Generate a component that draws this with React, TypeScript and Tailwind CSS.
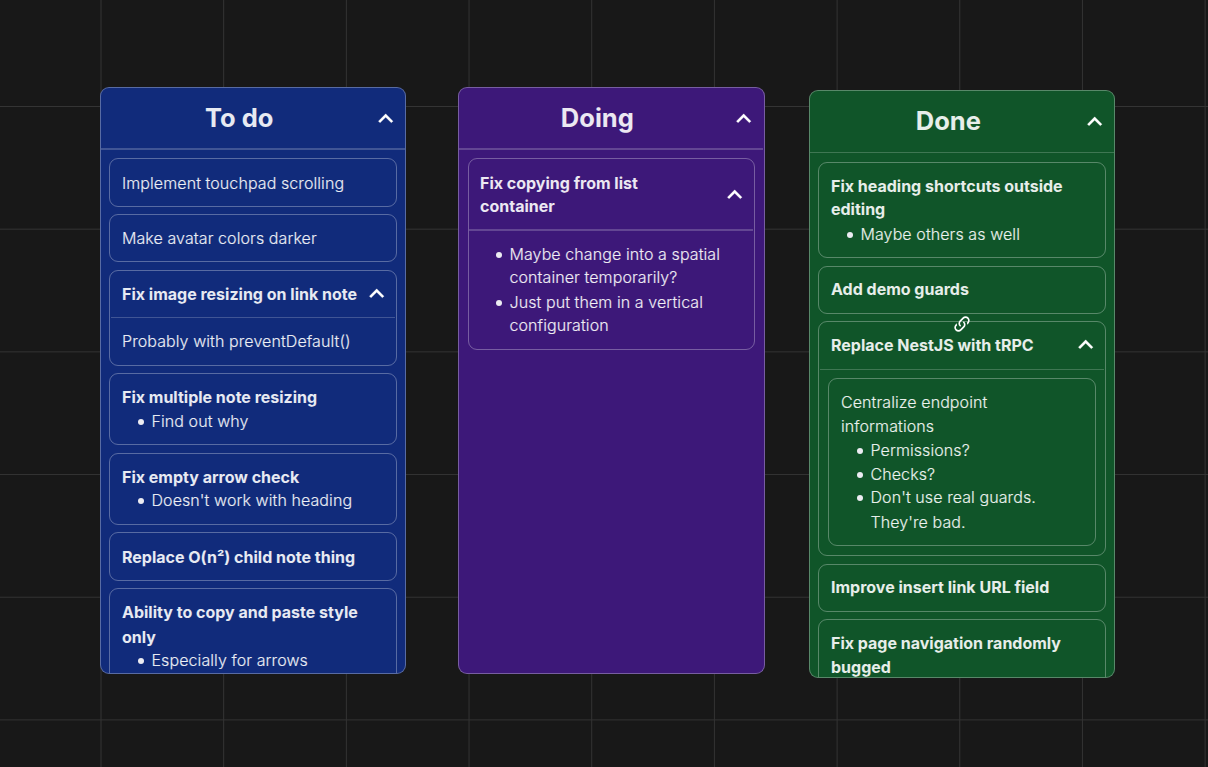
import type { ReactNode } from 'react';

const CELL = 122.68;
const columns = Array.from({ length: 10 }, (_, i) => 101 + i * CELL);
const rows = Array.from({ length: 6 }, (_, i) => 106.5 + i * CELL);

function Grid() {
  return (
    <svg className="absolute inset-0 h-full w-full" stroke="#343434" strokeWidth="1">
      {columns.map((x) => (
        <line key={x} x1={x} x2={x} y1="0" y2="767" />
      ))}
      {rows.map((y) => (
        <line key={y} x1="0" x2="1208" y1={y} y2={y} />
      ))}
    </svg>
  );
}

function Chevron({ className = '' }: { className?: string }) {
  return (
    <svg viewBox="0 0 24 24" fill="#fff" stroke="#fff" strokeWidth="0.2" className={`size-[29.4px] shrink-0 ${className}`}>
      <path d="M7.41 15.41 12 10.83l4.59 4.58L18 14l-6-6-6 6z" />
    </svg>
  );
}

function LinkIcon({ className = '' }: { className?: string }) {
  return (
    <svg viewBox="0 0 24 24" fill="#fff" className={`size-[20px] ${className}`}>
      <path d="M10.59,13.41C11,13.8 11,14.44 10.59,14.83C10.2,15.22 9.56,15.22 9.17,14.83C7.22,12.88 7.22,9.71 9.17,7.76V7.76L12.71,4.22C14.66,2.27 17.83,2.27 19.78,4.22C21.73,6.17 21.73,9.34 19.78,11.29L18.29,12.78C18.3,11.96 18.17,11.14 17.89,10.36L18.36,9.88C19.54,8.71 19.54,6.81 18.36,5.64C17.19,4.46 15.29,4.46 14.12,5.64L10.59,9.17C9.41,10.34 9.41,12.24 10.59,13.41M13.41,9.17C13.8,8.78 14.44,8.78 14.83,9.17C16.78,11.12 16.78,14.29 14.83,16.24V16.24L11.29,19.78C9.34,21.73 6.17,21.73 4.22,19.78C2.27,17.83 2.27,14.66 4.22,12.71L5.71,11.22C5.7,12.04 5.83,12.86 6.11,13.65L5.64,14.12C4.46,15.29 4.46,17.19 5.64,18.36C6.81,19.54 8.71,19.54 9.88,18.36L13.41,14.83C14.59,13.66 14.59,11.76 13.41,10.59C13,10.2 13,9.56 13.41,9.17Z" />
    </svg>
  );
}

function Line({ children, bold, className = 'h-6' }: { children: ReactNode; bold?: boolean; className?: string }) {
  return <p className={`whitespace-nowrap ${bold ? 'font-bold' : 'font-light tracking-[0.085px] [-webkit-text-stroke:0.12px]'} ${className}`}>{children}</p>;
}

function Bullet({ children, className = '' }: { children: ReactNode; className?: string }) {
  return (
    <li className={`flex ${className}`}>
      <span className="mt-[10px] mr-[7.5px] ml-[16px] size-[6px] shrink-0 rounded-full bg-[#ececf2]" />
      <div>{children}</div>
    </li>
  );
}

function Card({ children, className = '' }: { children: ReactNode; className?: string }) {
  return <section className={`relative shrink-0 rounded-[9px] border border-white/30 ${className}`}>{children}</section>;
}

function Column({ title, titleClass = '', headClass, className, children }: { title: string; titleClass?: string; headClass: string; className: string; children: ReactNode }) {
  return (
    <article className={`flex shrink-0 flex-col overflow-hidden rounded-[9px] border border-white/30 ${className}`}>
      <header className={`flex shrink-0 items-center border-white/20 pr-[4.5px] pl-[6.5px] ${headClass}`}>
        <h2 className={`flex-1 text-center text-[25.5px] leading-[30px] font-bold ${titleClass}`}>{title}</h2>
        <Chevron />
      </header>
      {children}
    </article>
  );
}

export default function App() {
  return (
    <main className="relative h-[767px] w-[1208px] overflow-hidden bg-[#181818] font-['Inter',sans-serif] text-[16px] leading-6 text-white/90">
      <Grid />
      <div className="relative flex items-start pt-[87px] pl-[100px]">
        <Column title="To do" titleClass="-mt-[2px]" className="h-[587px] w-[306px] bg-[#112b7b]" headClass="h-[62px] border-b-2 pt-[2px]">
          <div className="flex flex-col px-[8px] pt-[8px]">
            <Card className="h-[49px] p-3"><Line>Implement touchpad scrolling</Line></Card>
            <Card className="mt-[7px] h-[48px] px-3 pt-[11px]"><Line>Make avatar colors darker</Line></Card>
            <Card className="mt-[8px] h-[96px]">
              <div className="mx-px flex h-[47px] items-center justify-between border-b border-white/20 pr-[4px] pl-[11px]">
                <Line bold>Fix image resizing on link note</Line>
                <Chevron />
              </div>
              <Line className="px-3 pt-[11px]">Probably with preventDefault()</Line>
            </Card>
            <Card className="mt-[7px] h-[72px] px-3 pt-[11px]">
              <Line bold>Fix multiple note resizing</Line>
              <ul><Bullet><Line>Find out why</Line></Bullet></ul>
            </Card>
            <Card className="mt-[8px] h-[72px] px-3 pt-[11px]">
              <Line bold className="h-[23px]">Fix empty arrow check</Line>
              <ul><Bullet><Line>Doesn't work with heading</Line></Bullet></ul>
            </Card>
            <Card className="mt-[7px] h-[49px] p-3"><Line bold>Replace O(n²) child note thing</Line></Card>
            <Card className="mt-[7px] h-[120px] px-3 pt-[11px]">
              <Line bold className="h-[25px]">Ability to copy and paste style</Line>
              <Line bold className="h-[23px]">only</Line>
              <ul><Bullet><Line>Especially for arrows</Line></Bullet></ul>
            </Card>
          </div>
        </Column>

        <Column title="Doing" titleClass="-mt-[2px]" className="ml-[52px] h-[587px] w-[307px] bg-[#3d1879]" headClass="mr-px h-[62px] border-b-2 pt-[2px]">
          <div className="flex flex-col pt-[8px] pr-[9px] pl-[9px]">
            <Card className="h-[192px]">
              <div className="mr-px flex h-[72px] items-center justify-between border-b-2 border-white/20 pr-[4px] pl-[11px]">
                <div>
                  <Line bold className="h-[23px]">Fix copying from list</Line>
                  <Line bold>container</Line>
                </div>
                <Chevron className="mt-[2px]" />
              </div>
              <ul className="px-[11px] pt-[11px]">
                <Bullet>
                  <Line className="h-[23px]">Maybe change into a spatial</Line>
                  <Line className="h-[25px]">container temporarily?</Line>
                </Bullet>
                <Bullet>
                  <Line className="h-[23px]">Just put them in a vertical</Line>
                  <Line>configuration</Line>
                </Bullet>
              </ul>
            </Card>
          </div>
        </Column>

        <Column title="Done" titleClass="-mt-px" className="mt-[3px] ml-[44px] h-[588px] w-[306px] bg-[#105529]" headClass="h-[62px] border-b">
          <div className="flex flex-col px-[8px] pt-[9px]">
            <Card className="h-[96px] px-3 pt-[11px]">
              <Line bold className="h-[23px]">Fix heading shortcuts outside</Line>
              <Line bold className="h-[25px]">editing</Line>
              <ul><Bullet><Line>Maybe others as well</Line></Bullet></ul>
            </Card>
            <Card className="mt-[8px] h-[48px] px-3 pt-[10px]"><Line bold>Add demo guards</Line></Card>
            <Card className="mt-[7px] h-[235px]">
              <LinkIcon className="absolute top-[-8px] left-[133px]" />
              <div className="mx-px flex h-[48px] items-center justify-between border-b border-white/20 pr-[4px] pb-px pl-[11px]">
                <Line bold>Replace NestJS with tRPC</Line>
                <Chevron />
              </div>
              <Card className="mx-[9px] mt-[8px] h-[168px] px-3 pt-[11px]">
                <Line>Centralize endpoint</Line>
                <Line>informations</Line>
                <ul>
                  <Bullet><Line>Permissions?</Line></Bullet>
                  <Bullet><Line className="h-[23px]">Checks?</Line></Bullet>
                  <Bullet>
                    <Line className="h-[25px]">Don't use real guards.</Line>
                    <Line>They're bad.</Line>
                  </Bullet>
                </ul>
              </Card>
            </Card>
            <Card className="mt-[8px] h-[48px] px-3 pt-[10px]"><Line bold>Improve insert link URL field</Line></Card>
            <Card className="mt-[7px] h-[120px] px-3 pt-[11px]">
              <Line bold>Fix page navigation randomly</Line>
              <Line bold>bugged</Line>
            </Card>
          </div>
        </Column>
      </div>
    </main>
  );
}
